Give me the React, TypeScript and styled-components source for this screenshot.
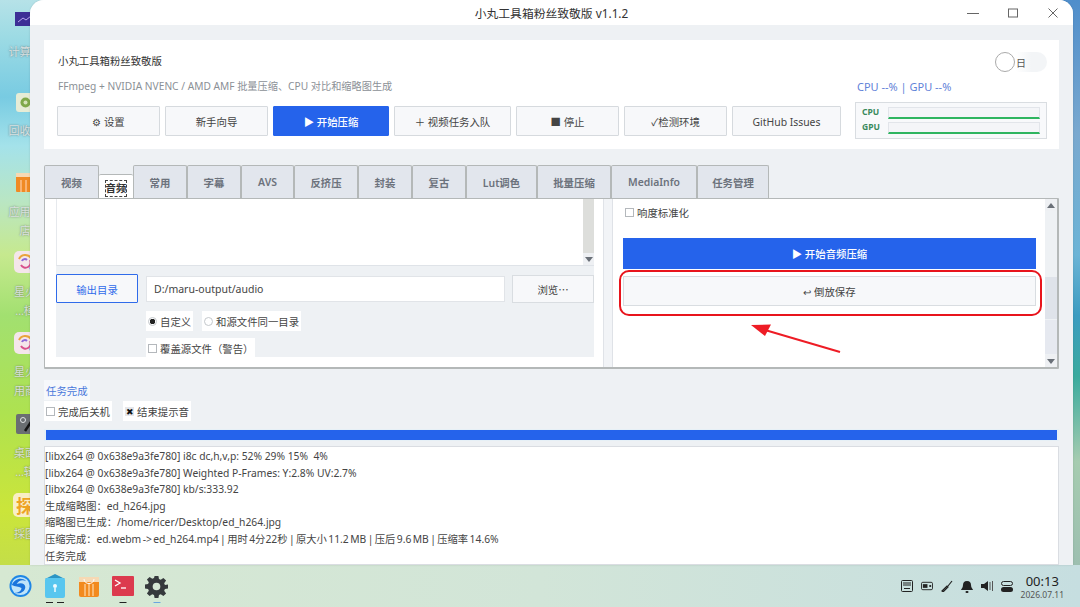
import type { ReactNode } from 'react';
import styled, { createGlobalStyle } from 'styled-components';

const FONT = `"Noto Sans", "Noto Sans CJK SC", sans-serif`;

const GlobalStyle = createGlobalStyle`
  html, body {
    margin: 0;
    padding: 0;
    width: 1080px;
    height: 607px;
    overflow: hidden;
    font-family: ${FONT};
  }
  * { box-sizing: border-box; }
`;

const sparkGlyph = (
  <svg width="22" height="22" viewBox="0 0 22 22">
    <rect width="22" height="22" rx="5" fill="#f4e6ea" />
    <path d="M5 8a7 7 0 0 1 12-1" stroke="#e9a43c" strokeWidth="2" fill="none" />
    <path d="M16 9a5 5 0 0 1-9 5" stroke="#d8508c" strokeWidth="2" fill="none" />
    <path d="M8 10a3 3 0 0 1 5-1" stroke="#8f6ad8" strokeWidth="2" fill="none" />
    <circle cx="18" cy="17" r="2.500" fill="#2f7fe0" />
  </svg>
);

const DESKTOP_ITEMS: { top: number; gap: number; lines: string[]; glyph: ReactNode }[] = [
  {
    top: 12,
    gap: 16,
    lines: ['计算机'],
    glyph: (
      <svg width="20" height="14" viewBox="0 0 20 14">
        <rect width="20" height="14" fill="#3c2f96" />
        <path d="M3 10l5-4 3 2 5-4" stroke="#b9a8ee" fill="none" />
      </svg>
    ),
  },
  {
    top: 93,
    gap: 9,
    lines: ['回收站'],
    glyph: (
      <svg width="19" height="19" viewBox="0 0 19 19">
        <rect width="19" height="19" rx="3" fill="#e6ecd6" />
        <circle cx="9.500" cy="9.500" r="5" fill="#7fa84a" />
        <circle cx="9.500" cy="9.500" r="2" fill="#d5e2b8" />
      </svg>
    ),
  },
  {
    top: 173,
    gap: 10,
    lines: ['应用商', '店'],
    glyph: (
      <svg width="19" height="19" viewBox="0 0 19 19">
        <rect width="19" height="19" rx="1" fill="#f08a24" />
        <rect width="19" height="4" fill="#f6d9b4" />
        <path d="M5 7v12M10 7v12M15 7v12" stroke="#fbc08a" strokeWidth="1.500" />
      </svg>
    ),
  },
  { top: 251, gap: 9, lines: ['星火', '…桓'], glyph: sparkGlyph },
  { top: 332, gap: 8, lines: ['星火', '用商'], glyph: sparkGlyph },
  {
    top: 414,
    gap: 9,
    lines: ['桌面', '…辑'],
    glyph: (
      <svg width="18" height="20" viewBox="0 0 18 20">
        <rect width="18" height="20" rx="2" fill="#6a6e72" />
        <circle cx="7" cy="6" r="2.500" fill="none" stroke="#dfe2e4" />
        <path d="M9 17l6-9" stroke="#151515" strokeWidth="2.500" />
      </svg>
    ),
  },
  {
    top: 493,
    gap: 7,
    lines: ['採图'],
    glyph: <DesktopTile>探</DesktopTile>,
  },
];

const TOP_BUTTONS = [
  { label: '⚙ 设置', width: 103 },
  { label: '新手向导', width: 103 },
  { label: '▶ 开始压缩', width: 116, primary: true },
  { label: '＋ 视频任务入队', width: 117 },
  { label: '■ 停止', width: 103 },
  { label: '✓检测环境', width: 103 },
  { label: 'GitHub Issues', width: 109 },
];

const TABS = [
  { label: '视频', width: 55 },
  { label: '音频', width: 34, active: true },
  { label: '常用', width: 54 },
  { label: '字幕', width: 54 },
  { label: 'AVS', width: 53 },
  { label: '反挤压', width: 64 },
  { label: '封装', width: 54 },
  { label: '复古', width: 54 },
  { label: 'Lut调色', width: 71 },
  { label: '批量压缩', width: 74 },
  { label: 'MediaInfo', width: 86 },
  { label: '任务管理', width: 72 },
];

const LOG_LINES = [
  { text: '[libx264 @ 0x638e9a3fe780] i8c dc,h,v,p: 52% 29% 15%  4%' },
  { text: '[libx264 @ 0x638e9a3fe780] Weighted P-Frames: Y:2.8% UV:2.7%' },
  { text: '[libx264 @ 0x638e9a3fe780] kb/s:333.92' },
  { text: '生成缩略图：ed_h264.jpg' },
  { text: '缩略图已生成：/home/ricer/Desktop/ed_h264.jpg' },
  {
    text: '压缩完成：ed.webm -> ed_h264.mp4 | 用时 4分22秒 | 原大小 11.2 MB | 压后 9.6 MB | 压缩率 14.6%',
    tight: true,
  },
  { text: '任务完成' },
];

export default function App() {
  return (
    <Desktop>
      <GlobalStyle />
      {DESKTOP_ITEMS.map((item) => (
        <DesktopIcon key={item.top} $top={item.top} $gap={item.gap}>
          {item.glyph}
          <DesktopLabel>
            {item.lines.map((line) => (
              <span key={line}>{line}</span>
            ))}
          </DesktopLabel>
        </DesktopIcon>
      ))}

      <WindowArea>
        <AppWindow>
          <TitleBar>
            <WindowTitle>小丸工具箱粉丝致敬版 v1.1.2</WindowTitle>
            <WindowControls>
              <svg width="12" height="12" viewBox="0 0 12 12">
                <path d="M0 6.500h12" stroke="#666" strokeWidth="1" fill="none" />
              </svg>
              <svg width="12" height="12" viewBox="0 0 12 12">
                <rect x="1.500" y="2" width="9" height="8" stroke="#666" fill="none" />
              </svg>
              <svg width="12" height="12" viewBox="0 0 12 12">
                <path d="M1.500 1.500l9 9M10.500 1.500l-9 9" stroke="#666" fill="none" />
              </svg>
            </WindowControls>
          </TitleBar>

          <WindowBody>
            <HeaderCard>
              <HeaderMain>
                <AppName>小丸工具箱粉丝致敬版</AppName>
                <AppDesc>FFmpeg + NVIDIA NVENC / AMD AMF 批量压缩、CPU 对比和缩略图生成</AppDesc>
                <ButtonRow>
                  {TOP_BUTTONS.map((b) => (
                    <ActionButton key={b.label} $width={b.width} $primary={b.primary}>
                      {b.label}
                    </ActionButton>
                  ))}
                </ButtonRow>
              </HeaderMain>
              <HeaderSide>
                <ThemeToggle>
                  <ToggleKnob />
                  日
                </ThemeToggle>
                <UsageText>CPU --% | GPU --%</UsageText>
                <Monitor>
                  <MonitorRow>
                    <MonitorLabel>CPU</MonitorLabel>
                    <MonitorBar />
                  </MonitorRow>
                  <MonitorRow>
                    <MonitorLabel>GPU</MonitorLabel>
                    <MonitorBar />
                  </MonitorRow>
                </Monitor>
              </HeaderSide>
            </HeaderCard>

            <TabBar>
              {TABS.map((t) =>
                t.active ? (
                  <ActiveTab key={t.label} $width={t.width}>
                    <FocusLabel>{t.label}</FocusLabel>
                  </ActiveTab>
                ) : (
                  <Tab key={t.label} $width={t.width}>
                    {t.label}
                  </Tab>
                ),
              )}
            </TabBar>

            <TabPane>
              <LeftPanel>
                <FileList>
                  <ListScroll>
                    <ScrollArrow $down />
                  </ListScroll>
                </FileList>
                <OutputBlock>
                  <OutputRow>
                    <OutputButton>输出目录</OutputButton>
                    <PathInput>D:/maru-output/audio</PathInput>
                    <BrowseButton>浏览⋯</BrowseButton>
                  </OutputRow>
                  <RadioRow>
                    <Chip $width={47}>
                      <Radio $checked />
                      自定义
                    </Chip>
                    <Chip $width={99}>
                      <Radio />
                      和源文件同一目录
                    </Chip>
                  </RadioRow>
                  <OverwriteRow>
                    <Chip $width={109}>
                      <CheckBox />
                      覆盖源文件（警告）
                    </Chip>
                  </OverwriteRow>
                </OutputBlock>
              </LeftPanel>
              <PanelSplitter />
              <RightPanel>
                <NormalizeRow>
                  <CheckBox />
                  响度标准化
                </NormalizeRow>
                <WideButton $primary>▶ 开始音频压缩</WideButton>
                <WideButton>↩ 倒放保存</WideButton>
                <RedOutline />
                <RedArrow width="100" height="40" viewBox="0 0 100 40">
                  <path d="M90 28L15 6" stroke="#ee1c25" strokeWidth="2" fill="none" />
                  <path d="M1 1L21 0.500L15 12Z" fill="#ee1c25" />
                </RedArrow>
              </RightPanel>
              <PaneScroll>
                <ScrollArrow />
                <PaneThumb />
                <PaneTrackLow />
                <ScrollArrow $down />
              </PaneScroll>
            </TabPane>

            <StatusChip>任务完成</StatusChip>
            <OptionRow>
              <Chip $width={68}>
                <CheckBox />
                完成后关机
              </Chip>
              <Chip $width={68}>
                <CheckedBox>✖</CheckedBox>
                结束提示音
              </Chip>
            </OptionRow>
            <ProgressTrack>
              <ProgressFill />
            </ProgressTrack>
            <LogBox>
              {LOG_LINES.map((line) => (
                <LogLine key={line.text} $tight={line.tight}>
                  {line.text}
                </LogLine>
              ))}
            </LogBox>
          </WindowBody>
        </AppWindow>
      </WindowArea>

      <Taskbar>
        <DockIcons>
          <DockSlot>
            <svg width="24" height="24" viewBox="0 0 24 24">
              <circle cx="12" cy="12" r="11.500" fill="#1e86e6" />
              <circle cx="12" cy="12" r="9.500" fill="#bfe4fa" />
              <path d="M3 11c2-6 10-9 15-4-4-2-8-1-10 3 4-2 9-1 9 3 0 5-6 8-11 6 4 0 7-2 7-5-3-2-7-1-10-3z" fill="#1a74dc" />
            </svg>
          </DockSlot>
          <DockSlot $marks={2}>
            <svg width="22" height="24" viewBox="0 0 22 24">
              <path d="M1 5l10-5 10 5z" fill="#2c95c4" />
              <rect x="1" y="4" width="20" height="20" rx="2" fill="#58c6ef" />
              <circle cx="11" cy="12" r="2" fill="#f0fbff" />
              <path d="M11 14v4" stroke="#f0fbff" strokeWidth="1.500" />
            </svg>
          </DockSlot>
          <DockSlot>
            <svg width="22" height="22" viewBox="0 0 22 22">
              <rect x="1" y="2" width="20" height="20" rx="2" fill="#f28a1e" />
              <rect x="1" y="2" width="20" height="5" fill="#f6d9b4" />
              <path d="M6 4c0 6 10 6 10 0" stroke="#fff" fill="none" />
              <path d="M7 9v12M11 9v12M15 9v12" stroke="#fbc98e" strokeWidth="1.500" />
            </svg>
          </DockSlot>
          <DockSlot $marks={1}>
            <svg width="22" height="20" viewBox="0 0 22 20">
              <rect width="22" height="20" rx="1" fill="#dc3a4e" />
              <path d="M3 4l5 3-5 3" stroke="#fff" fill="none" strokeWidth="1.300" />
              <path d="M9 12h5" stroke="#fff" strokeWidth="1.300" />
            </svg>
          </DockSlot>
          <DockSlot $marks={1} $markTone="#6aa5e0">
            <svg width="23" height="23" viewBox="0 0 24 24">
              <path
                fill="#35393c"
                fillRule="evenodd"
                d="M10 1h4l.6 3.200 1.800.8L19.200 3l2.800 2.800-2 2.800.8 1.800L24 10v4l-3.200.6-.8 1.800 2 2.800-2.800 2.800-2.800-2-1.800.8L14 24h-4l-.6-3.200-1.800-.8-2.800 2L2 19.200l2-2.800-.8-1.800L0 14v-4l3.200-.6.8-1.800-2-2.800L4.800 2l2.800 2 1.800-.8zM12 8a4 4 0 100 8 4 4 0 000-8z"
              />
            </svg>
          </DockSlot>
        </DockIcons>
        <Tray>
          <svg width="12" height="12" viewBox="0 0 12 12">
            <rect x=".5" y=".5" width="11" height="11" rx="1" fill="none" stroke="#222" />
            <path d="M2 3h8M2 5h8M3 8.500h6" stroke="#222" />
          </svg>
          <svg width="12" height="10" viewBox="0 0 13 10">
            <rect x=".5" y="1" width="12" height="8" rx="1.500" fill="none" stroke="#222" />
            <rect x="2" y="3" width="5" height="4" fill="#222" />
            <rect x="9" y="4" width="2" height="2" fill="#222" />
          </svg>
          <svg width="12" height="12" viewBox="0 0 12 12">
            <path d="M1 11l5-5 1 1-5 5zM7 6l4-5" stroke="#222" strokeWidth="1.200" fill="none" />
          </svg>
          <svg width="12" height="13" viewBox="0 0 12 13">
            <path d="M6 1c3 0 4 2 4 4 0 3 2 4 2 5H0c0-1 2-2 2-5 0-2 1-4 4-4z" fill="#222" />
            <rect x="4.500" y="11" width="3" height="2" rx="1" fill="#222" />
          </svg>
          <svg width="12" height="10" viewBox="0 0 12 10">
            <path d="M0 3h3l4-3v10L3 7H0z" fill="#222" />
            <path d="M9 1v8M11.500 0v10" stroke="#555" />
          </svg>
          <svg width="12" height="11" viewBox="0 0 12 11">
            <rect x=".5" y=".5" width="11" height="4" rx="2" fill="none" stroke="#222" />
            <rect x="0" y="6" width="12" height="5" rx="2.500" fill="#222" />
          </svg>
          <Clock>
            <ClockTime>00:13</ClockTime>
            <ClockDate>2026.07.11</ClockDate>
          </Clock>
        </Tray>
      </Taskbar>
    </Desktop>
  );
}

function DesktopTile({ children }: { children: ReactNode }) {
  return <TileBox>{children}</TileBox>;
}

const TileBox = styled.div`
  width: 24px;
  height: 24px;
  display: flex;
  align-items: center;
  justify-content: center;
  font-size: 18px;
  font-weight: 700;
  color: #eea321;
  background: #f9eec6;
  border-radius: 5px;
`;

const Desktop = styled.div`
  position: relative;
  width: 1080px;
  height: 607px;
  overflow: hidden;
  display: flex;
  flex-direction: column;
  background-color: #9fc8d0;
  background-image:
    linear-gradient(
      180deg,
      #b6e2e8 0%,
      #9ddbe4 6%,
      #78cbe2 16%,
      #a4e2ea 24%,
      #b9e6c4 33%,
      #c6e98e 42%,
      #a2e070 52%,
      #aee250 68%,
      #cbe53a 84%,
      #c4de48 93%
    ),
    linear-gradient(
      180deg,
      #4f8ecb 0%,
      #7aa9cf 22%,
      #6cb4d6 42%,
      #3c9cc0 52%,
      #3bab9e 62%,
      #a6ccb0 76%,
      #9dbfb0 93%
    );
  background-size: 50% 100%, 50% 100%;
  background-position: left top, right top;
  background-repeat: no-repeat;
`;

const DesktopIcon = styled.div<{ $top: number; $gap: number }>`
  position: absolute;
  top: ${({ $top }) => $top}px;
  left: 0;
  width: 50px;
  display: flex;
  flex-direction: column;
  align-items: center;
  gap: ${({ $gap }) => $gap}px;
`;

const DesktopLabel = styled.div`
  display: flex;
  flex-direction: column;
  align-items: center;
  font-size: 11px;
  line-height: 19px;
  white-space: nowrap;
  color: rgba(225, 232, 232, 0.9);
  text-shadow: 0 0 2px rgba(80, 80, 80, 0.75);
`;

const WindowArea = styled.div`
  position: relative;
  flex: 1;
  min-height: 0;
  padding: 0 7px 0 30px;
`;

const AppWindow = styled.div`
  height: 565px;
  display: flex;
  flex-direction: column;
  overflow: hidden;
  border-radius: 14px 14px 0 0;
  background: #eef1f4;
  box-shadow: 0 0 2px rgba(0, 0, 0, 0.15);
`;

const TitleBar = styled.div`
  position: relative;
  height: 25px;
  flex: none;
  display: flex;
  align-items: center;
  justify-content: center;
  background: #fff;
`;

const WindowTitle = styled.div`
  font-size: 11.8px;
  color: #333;
`;

const WindowControls = styled.div`
  position: absolute;
  right: 14px;
  top: 7px;
  display: flex;
  gap: 28px;
`;

const WindowBody = styled.div`
  flex: 1;
  min-height: 0;
  padding: 15px 14px 0;
  display: flex;
  flex-direction: column;
`;

const HeaderCard = styled.div`
  height: 109px;
  flex: none;
  display: flex;
  justify-content: space-between;
  padding: 0 12px 0 13px;
  background: #fff;
`;

const HeaderMain = styled.div`
  display: flex;
  flex-direction: column;
`;

const AppName = styled.div`
  margin: 12px 0 0 1px;
  font-size: 10.4px;
  line-height: 18px;
  color: #333;
`;

const AppDesc = styled.div`
  margin: 7px 0 0 1px;
  font-size: 10.2px;
  line-height: 18px;
  color: #8b9096;
`;

const ButtonRow = styled.div`
  display: flex;
  gap: 5px;
  margin-top: 11px;
`;

const ActionButton = styled.div<{ $width: number; $primary?: boolean }>`
  width: ${({ $width }) => $width}px;
  height: 30px;
  padding-top: 1px;
  display: flex;
  align-items: center;
  justify-content: center;
  font-size: 10.4px;
  font-weight: ${({ $primary }) => ($primary ? 500 : 400)};
  border-radius: 1px;
  color: ${({ $primary }) => ($primary ? '#fff' : '#444')};
  background: ${({ $primary }) => ($primary ? '#2563eb' : '#f7f8fa')};
  border: 1.5px solid ${({ $primary }) => ($primary ? '#2563eb' : '#d6dade')};
`;

const HeaderSide = styled.div`
  width: 192px;
  display: flex;
  flex-direction: column;
`;

const ThemeToggle = styled.div`
  align-self: flex-end;
  width: 52px;
  height: 20px;
  margin-top: 12px;
  display: flex;
  align-items: center;
  gap: 1px;
  font-size: 10px;
  color: #555;
  border-radius: 10px;
  background: linear-gradient(90deg, #fff 40%, #f3f5f7 70%);
`;

const ToggleKnob = styled.div`
  width: 20px;
  height: 20px;
  border-radius: 50%;
  border: 1px solid #aaa;
  background: #fff;
`;

const UsageText = styled.div`
  margin: 7px 0 0 2px;
  font-size: 11px;
  line-height: 16px;
  color: #5f82d8;
`;

const Monitor = styled.div`
  height: 37px;
  margin-top: 7px;
  padding: 4px 6px 0 6px;
  display: flex;
  flex-direction: column;
  gap: 3px;
  background: #f8f9fb;
  border: 1px solid #d9dde1;
`;

const MonitorRow = styled.div`
  display: flex;
  align-items: flex-start;
  justify-content: space-between;
`;

const MonitorLabel = styled.div`
  font-size: 8.5px;
  line-height: 9px;
  font-weight: 700;
  color: #3a8a5c;
`;

const MonitorBar = styled.div`
  width: 152px;
  height: 12px;
  background: #f4f5f8;
  border: 1px solid #e2e5ea;
  border-bottom: 2px solid #2fb560;
`;

const TabBar = styled.div`
  height: 33px;
  flex: none;
  margin-top: 16px;
  display: flex;
  align-items: flex-end;
`;

const Tab = styled.div<{ $width: number }>`
  width: ${({ $width }) => $width}px;
  height: 33px;
  display: flex;
  align-items: center;
  justify-content: center;
  font-size: 10.4px;
  font-weight: 600;
  color: #6c727c;
  background: #e2e6ed;
  border: 1px solid #b4b8b8;
  border-bottom: none;
  border-radius: 2px 2px 0 0;
`;

const ActiveTab = styled(Tab)`
  height: 24px;
  background: #fff;
  color: #333;
  border-left: none;
  border-right: none;
  padding-top: 4px;
`;

const FocusLabel = styled.span`
  border: 1px dashed #444;
  line-height: 15px;
`;

const TabPane = styled.div`
  height: 171px;
  flex: none;
  display: flex;
  background: #fff;
  border: 1px solid #b4b8b8;
  border-width: 1px 2px 2px 1px;
  border-radius: 1px;
`;

const LeftPanel = styled.div`
  width: 558px;
  flex: none;
  padding: 0 9px 10px 11px;
  display: flex;
  flex-direction: column;
`;

const FileList = styled.div`
  height: 67px;
  flex: none;
  display: flex;
  justify-content: flex-end;
  background: #fff;
  border-bottom: 1px solid #dfe3e8;
  border-left: 1px solid #e6e9ed;
`;

const ListScroll = styled.div`
  width: 11px;
  display: flex;
  flex-direction: column;
  justify-content: flex-end;
  background: #dddedb;
`;

const ScrollArrow = styled.div<{ $down?: boolean }>`
  height: 12px;
  flex: none;
  display: flex;
  align-items: center;
  justify-content: center;
  background: #eef0f3;
  &::before {
    content: '';
    border-left: 4px solid transparent;
    border-right: 4px solid transparent;
    ${({ $down }) =>
      $down ? 'border-top: 5px solid #6a7078;' : 'border-bottom: 5px solid #6a7078;'}
  }
`;

const OutputBlock = styled.div`
  flex: 1;
  background: #eef1f4;
  display: flex;
  flex-direction: column;
  overflow: hidden;
`;

const OutputRow = styled.div`
  display: flex;
  align-items: center;
  margin-top: 8px;
  height: 29px;
  flex: none;
`;

const OutputButton = styled.div`
  width: 82px;
  height: 29px;
  padding-top: 1px;
  display: flex;
  align-items: center;
  justify-content: center;
  font-size: 10.4px;
  color: #2f6bea;
  background: #f7f8fa;
  border: 1.5px solid #2f6bea;
  border-radius: 1px;
`;

const PathInput = styled.div`
  width: 359px;
  height: 26px;
  margin: 0 7px 0 8px;
  padding: 1px 0 0 7px;
  display: flex;
  align-items: center;
  font-size: 10.5px;
  color: #444;
  background: #fff;
  border: 1px solid #e1e4e8;
`;

const BrowseButton = styled.div`
  width: 82px;
  height: 28px;
  padding-top: 1px;
  display: flex;
  align-items: center;
  justify-content: center;
  font-size: 10.4px;
  color: #444;
  background: #f7f8fa;
  border: 1px solid #d9dde1;
`;

const RadioRow = styled.div`
  display: flex;
  gap: 9px;
  margin: 8px 0 0 90px;
`;

const OverwriteRow = styled.div`
  display: flex;
  margin: 7px 0 0 90px;
`;

const Chip = styled.div<{ $width: number }>`
  width: ${({ $width }) => $width}px;
  height: 20px;
  padding-left: 2px;
  display: flex;
  align-items: center;
  gap: 3px;
  font-size: 10.4px;
  color: #444;
  background: #fff;
  white-space: nowrap;
`;

const Radio = styled.span<{ $checked?: boolean }>`
  width: 9px;
  height: 9px;
  flex: none;
  border-radius: 50%;
  border: 1px solid #c4c8cc;
  background: ${({ $checked }) =>
    $checked ? 'radial-gradient(circle, #222 0 2.5px, #fff 3px)' : '#fff'};
`;

const CheckBox = styled.span`
  width: 9px;
  height: 9px;
  flex: none;
  border: 1px solid #b4b8bc;
  background: #fff;
`;

const CheckedBox = styled.span`
  width: 9px;
  height: 9px;
  flex: none;
  display: flex;
  align-items: center;
  justify-content: center;
  font-size: 9px;
  line-height: 9px;
  color: #111;
  background: #e4e6ea;
`;

const PanelSplitter = styled.div`
  width: 10px;
  flex: none;
  background: #f2f4f7;
  border-left: 1px solid #e0e3e8;
  border-right: 1px solid #dfe2e7;
`;

const RightPanel = styled.div`
  position: relative;
  flex: 1;
  padding: 0 9px 0 10px;
  display: flex;
  flex-direction: column;
`;

const NormalizeRow = styled.div`
  height: 26px;
  margin: 0 0 13px 2px;
  display: flex;
  align-items: center;
  gap: 3px;
  font-size: 10.4px;
  color: #444;
`;

const WideButton = styled.div<{ $primary?: boolean }>`
  height: ${({ $primary }) => ($primary ? 31 : 30)}px;
  margin-bottom: 7px;
  display: flex;
  align-items: center;
  justify-content: center;
  font-size: 10.4px;
  font-weight: ${({ $primary }) => ($primary ? 500 : 400)};
  color: ${({ $primary }) => ($primary ? '#fff' : '#444')};
  background: ${({ $primary }) => ($primary ? '#2563eb' : '#f7f8fa')};
  border: ${({ $primary }) => ($primary ? 'none' : '1px solid #d9dde1')};
`;

const RedOutline = styled.div`
  position: absolute;
  left: 6px;
  top: 71px;
  width: 423px;
  height: 46px;
  border: 2px solid #e8141c;
  border-radius: 10px;
`;

const RedArrow = styled.svg`
  position: absolute;
  left: 137px;
  top: 125px;
`;

const PaneScroll = styled.div`
  width: 12px;
  flex: none;
  display: flex;
  flex-direction: column;
  background: #eef1f4;
`;

const PaneThumb = styled.div`
  height: 42px;
  margin-top: 66px;
  background: #dfe3ea;
`;

const PaneTrackLow = styled.div`
  flex: 1;
  margin: 1px 0;
  background: #e6e9f0;
`;

const StatusChip = styled.div`
  align-self: flex-start;
  height: 20px;
  margin-top: 11px;
  padding: 0 2px;
  display: flex;
  align-items: center;
  font-size: 10.4px;
  color: #4a78dc;
  background: #f6f8fb;
`;

const OptionRow = styled.div`
  display: flex;
  gap: 11px;
  margin-top: 1px;
`;

const ProgressTrack = styled.div`
  height: 12px;
  margin-top: 8px;
  flex: none;
  padding: 1px 2px;
  background: #e6f0f6;
`;

const ProgressFill = styled.div`
  height: 100%;
  background: #2563eb;
`;

const LogBox = styled.div`
  flex: 1;
  min-height: 0;
  margin-top: 5px;
  padding: 1px 0 0 0;
  overflow: hidden;
  background: #fff;
  border: 1px solid #dadde2;
`;

const LogLine = styled.div<{ $tight?: boolean }>`
  font-size: 10.3px;
  line-height: 16.6px;
  color: #444;
  white-space: pre;
  word-spacing: ${({ $tight }) => ($tight ? '-1.25px' : '0')};
`;

const Taskbar = styled.div`
  height: 42px;
  flex: none;
  display: flex;
  align-items: center;
  justify-content: space-between;
  padding: 0 16px 0 9px;
  background: linear-gradient(90deg, #d6e8d2 0%, #d2e5d8 50%, #c6dee0 100%);
`;

const DockIcons = styled.div`
  display: flex;
  align-items: center;
  gap: 11px;
`;

const DockSlot = styled.div<{ $marks?: number; $markTone?: string }>`
  position: relative;
  width: 23px;
  height: 24px;
  display: flex;
  align-items: center;
  justify-content: center;
  &::after {
    content: '';
    position: absolute;
    left: 50%;
    bottom: -5px;
    width: ${({ $marks }) => ($marks === 2 ? 18 : $marks ? 7 : 0)}px;
    height: 1.5px;
    transform: translateX(-50%);
    background: ${({ $marks, $markTone }) =>
      $marks === 2
        ? 'linear-gradient(90deg, #222 0 40%, transparent 40% 60%, #222 60%)'
        : $markTone || '#222'};
  }
`;

const Tray = styled.div`
  display: flex;
  align-items: center;
  gap: 8px;
`;

const Clock = styled.div`
  margin-top: 3px;
  display: flex;
  flex-direction: column;
  align-items: center;
`;

const ClockTime = styled.div`
  font-size: 13px;
  line-height: 15px;
  color: #222;
`;

const ClockDate = styled.div`
  font-size: 8.5px;
  line-height: 12px;
  color: #555;
`;
